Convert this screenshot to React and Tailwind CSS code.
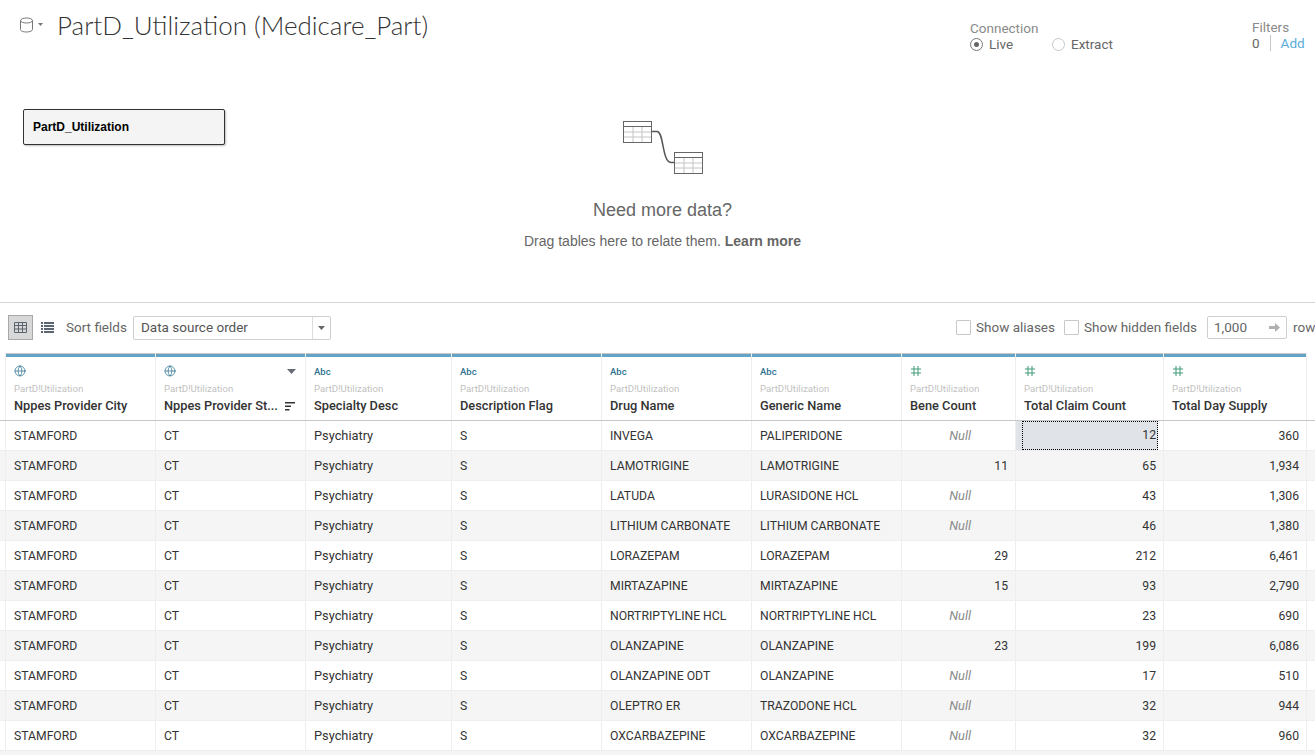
import { Globe } from 'lucide-react'

const bookFont = "font-['Roboto',sans-serif]"

const columns = [
  { name: 'Nppes Provider City', type: 'geo' },
  { name: 'Nppes Provider St...', type: 'geo', sorted: true },
  { name: 'Specialty Desc', type: 'abc' },
  { name: 'Description Flag', type: 'abc' },
  { name: 'Drug Name', type: 'abc' },
  { name: 'Generic Name', type: 'abc' },
  { name: 'Bene Count', type: 'num' },
  { name: 'Total Claim Count', type: 'num' },
  { name: 'Total Day Supply', type: 'num' },
]

const rows = [
  ['INVEGA', 'PALIPERIDONE', null, '12', '360'],
  ['LAMOTRIGINE', 'LAMOTRIGINE', '11', '65', '1,934'],
  ['LATUDA', 'LURASIDONE HCL', null, '43', '1,306'],
  ['LITHIUM CARBONATE', 'LITHIUM CARBONATE', null, '46', '1,380'],
  ['LORAZEPAM', 'LORAZEPAM', '29', '212', '6,461'],
  ['MIRTAZAPINE', 'MIRTAZAPINE', '15', '93', '2,790'],
  ['NORTRIPTYLINE HCL', 'NORTRIPTYLINE HCL', null, '23', '690'],
  ['OLANZAPINE', 'OLANZAPINE', '23', '199', '6,086'],
  ['OLANZAPINE ODT', 'OLANZAPINE', null, '17', '510'],
  ['OLEPTRO ER', 'TRAZODONE HCL', null, '32', '944'],
  ['OXCARBAZEPINE', 'OXCARBAZEPINE', null, '32', '960'],
]

const gridCols = 'grid grid-cols-[5px_150px_150px_146px_150px_150px_150px_114px_148px_143px_1fr]'

function TypeIcon({ type }) {
  if (type === 'geo') return <Globe size={12} strokeWidth={1.5} className="text-[#2f7391]" />
  if (type === 'abc') return <span className="pt-[2px] text-[9.5px] font-medium leading-3 text-[#2f7391]">Abc</span>
  return (
    <svg width="12" height="12" viewBox="0 0 12 12" fill="none" stroke="#3f9a78" strokeWidth="1">
      <path d="M4 1v10M8 1v10M1 4h10M1 8h10" />
    </svg>
  )
}

function TableIcon({ x = 0, y = 0 }) {
  return (
    <g transform={`translate(${x} ${y})`} fill="none">
      <rect x="0.5" y="0.5" width="28" height="21" fill="#fff" stroke="#666" />
      <rect x="0.5" y="0.5" width="28" height="5" fill="#fff" stroke="#666" />
      <path d="M10 6v15M19 6v15M1 11h27M1 16h27" stroke="#c4c4c4" />
    </g>
  )
}

function HeaderCell({ col }) {
  return (
    <div className="relative flex h-[67px] flex-col border-l border-[#eeeeee] pl-2">
      <div className="-ml-2 h-px bg-[#c8c8c8]" />
      <div className="-ml-2 h-[3px] bg-[#62a3c6]" />
      <div className="mt-[8px] flex h-3 items-center">
        <TypeIcon type={col.type} />
      </div>
      {col.sorted && (
        <svg className="absolute right-[9px] top-[16px]" width="9" height="5" viewBox="0 0 9 5">
          <path d="M0 0h9L4.5 5z" fill="#666b75" />
        </svg>
      )}
      <div className="mt-[6px] text-[9.6px] leading-[12px] text-[#c2c2c2]">PartD!Utilization</div>
      <div className="mt-[3px] flex items-center whitespace-nowrap text-[12.8px] font-medium leading-[16px] text-[#333]">
        {col.name}
        {col.sorted && (
          <svg className="ml-[7px]" width="10" height="10" viewBox="0 0 10 10" fill="#333">
            <path d="M0 1h10v1.5H0zM0 4.5h6V6H0zM0 8h4.5v1.5H0z" />
          </svg>
        )}
      </div>
    </div>
  )
}

function Cell({ children, right, mixed }) {
  return (
    <div
      className={`flex h-[29px] items-center border-l border-[#eeeeee] ${mixed ? 'text-[12.8px]' : 'pt-px text-[12.2px]'} ${
        right ? 'justify-end pr-[7px]' : 'pl-2'
      }`}
    >
      {children}
    </div>
  )
}

function Row({ row, index }) {
  const [drug, generic, bene, claims, supply] = row
  const selected = index === 0
  return (
    <div className={`${gridCols} border-b border-[#eeeeee] ${index % 2 ? 'bg-[#f5f5f5]' : 'bg-white'} text-[#333]`}>
      <div />
      <Cell>STAMFORD</Cell>
      <Cell>CT</Cell>
      <Cell mixed>Psychiatry</Cell>
      <Cell>S</Cell>
      <Cell>{drug}</Cell>
      <Cell>{generic}</Cell>
      <Cell right>
        {bene ?? <span className="mr-[37px] text-[12.8px] italic text-[#8c8c8c]">Null</span>}
      </Cell>
      <div className={`border-l border-[#eeeeee] pl-[6px] pr-[5px] ${selected ? 'bg-[linear-gradient(to_right,#e0e4e8_142px,#ffffff_142px)]' : ''}`}>
        <div className={`flex h-[29px] items-center justify-end text-[12.2px] ${selected ? 'border border-dotted border-black bg-[#e0e4e8] pr-px' : 'pt-px pr-[2px]'}`}>
          {claims}
        </div>
      </div>
      <Cell right>{supply}</Cell>
      <div className="border-l border-[#eeeeee]" />
    </div>
  )
}

export default function App() {
  return (
    <div className={`flex h-[755px] w-[1315px] flex-col overflow-hidden bg-white ${bookFont}`}>
      {/* Canvas */}
      <div className="h-[303px] shrink-0 border-b border-[#d4d4d4]">
        <div className="flex h-[109px] items-start">
          <div className="ml-[19px] mt-[17px] flex items-start">
            <svg width="16" height="16" viewBox="0 0 16 16" fill="none" stroke="#777" strokeWidth="1">
              <ellipse cx="7.5" cy="3.5" rx="6" ry="2.5" />
              <path d="M1.5 3.5v9c0 1.4 2.7 2.5 6 2.5s6-1.1 6-2.5v-9" />
            </svg>
            <svg className="ml-[3px] mt-[6px]" width="5" height="3" viewBox="0 0 5 3">
              <path d="M0 0h5L2.5 3z" fill="#777" />
            </svg>
          </div>
          <h1 className="ml-[14px] mt-[7px] font-['Lato',sans-serif] text-[26px] font-light leading-[36px] text-[#333]">
            PartD_Utilization (Medicare_Part)
          </h1>
          <div className="ml-auto mt-[20px] w-[282px] text-[13.5px] leading-[16px] text-[#8a8a8a]">
            Connection
            <div className="flex items-center text-[#666]">
              <span className="flex h-[13px] w-[13px] items-center justify-center rounded-full border border-[#777]">
                <span className="h-[5px] w-[5px] rounded-full bg-[#666]" />
              </span>
              <span className="ml-[6px] w-[63px]">Live</span>
              <span className="h-[13px] w-[13px] rounded-full border border-[#c8c8c8]" />
              <span className="ml-[6px]">Extract</span>
            </div>
          </div>
          <div className="mt-[19px] w-[63px] text-[13.5px] leading-[16px] text-[#8a8a8a]">
            Filters
            <div className="flex items-center text-[#666]">
              0
              <span className="mx-[10px] h-[16px] w-px bg-[#c8c8c8]" />
              <span className="text-[#5aaedc]">Add</span>
            </div>
          </div>
        </div>
        <div className="flex items-start">
          <div className="ml-[23px] flex h-[36px] w-[202px] items-center rounded-[2px] border border-[#333] bg-[#f4f4f4] pl-[9px] font-['Liberation_Sans',sans-serif] text-[12px] font-bold text-black shadow-[1px_1px_2px_rgba(0,0,0,0.25)]">
            PartD_Utilization
          </div>
          <div className="flex flex-1 flex-col items-center pr-[215px] pt-[12px] font-['Liberation_Sans',sans-serif]">
            <svg width="80" height="56" viewBox="0 0 80 56" fill="none" className="ml-[1px]">
              <TableIcon x={0} y={0} />
              <TableIcon x={51} y={31} />
              <path d="M29 10.5h5c7 0 5 31 14 31h3" stroke="#555" strokeWidth="1.5" />
            </svg>
            <div className="mt-[22px] text-[18px] leading-[22px] text-[#666]">Need more data?</div>
            <div className="mt-[10px] text-[14px] leading-[20px] text-[#666]">
              Drag tables here to relate them. <b>Learn more</b>
            </div>
          </div>
        </div>
      </div>

      {/* Toolbar */}
      <div className="flex h-[50px] shrink-0 items-center whitespace-nowrap pb-px text-[13.5px] text-[#666]">
        <div className="ml-[8px] flex h-[25px] w-[25px] items-center justify-center border border-[#a8a8a8] bg-[#d8d8d8]">
          <svg width="13" height="11" viewBox="0 0 13 11" fill="none" stroke="#5c6670">
            <path d="M.5.5h12v10H.5zM.5 3.5h12M.5 7h12M4.5.5v10M8.5.5v10" />
          </svg>
        </div>
        <svg className="ml-[8px]" width="13" height="11" viewBox="0 0 13 11" fill="#5c6670">
          <path d="M0 0h2v2H0zM3 0h10v2H3zM0 3h2v2H0zM3 3h10v2H3zM0 6h2v2H0zM3 6h10v2H3zM0 9h2v2H0zM3 9h10v2H3z" />
        </svg>
        <span className="ml-[12px] w-[61px]">Sort fields</span>
        <div className="ml-[6px] flex h-[24px] w-[198px] items-center rounded-[2px] border border-[#cfcfcf] text-[#555]">
          <span className="flex-1 pl-[7px]">Data source order</span>
          <span className="flex h-full w-[18px] items-center justify-center border-l border-[#dcdcdc]">
            <svg width="7" height="4" viewBox="0 0 7 4">
              <path d="M0 0h7L3.5 4z" fill="#666" />
            </svg>
          </span>
        </div>
        <span className="ml-auto h-[15px] w-[15px] rounded-[1px] border border-[#c8c8c8]" />
        <span className="ml-[5px] w-[77px]">Show aliases</span>
        <span className="ml-[11px] h-[15px] w-[15px] rounded-[1px] border border-[#c8c8c8]" />
        <span className="ml-[5px] w-[112px]">Show hidden fields</span>
        <div className="ml-[11px] flex h-[23px] w-[80px] items-center justify-between rounded-[2px] border border-[#cfcfcf] px-[6px]">
          1,000
          <svg width="11" height="9" viewBox="0 0 11 9">
            <path d="M0 3h6V0l5 4.5L6 9V6H0z" fill="#b0b0b0" />
          </svg>
        </div>
        <span className="ml-[6px] w-[22px] shrink-0">row</span>
      </div>

      {/* Data grid */}
      <div className="flex-1 overflow-hidden">
        <div className={`${gridCols} border-b border-[#c8c8c8]`}>
          <div />
          {columns.map(col => (
            <HeaderCell key={col.name} col={col} />
          ))}
          <div className="border-l border-[#eeeeee]" />
        </div>
        {rows.map((row, i) => (
          <Row key={row[0]} row={row} index={i} />
        ))}
        <div className="h-[30px] bg-[#f5f5f5]" />
      </div>
    </div>
  )
}
